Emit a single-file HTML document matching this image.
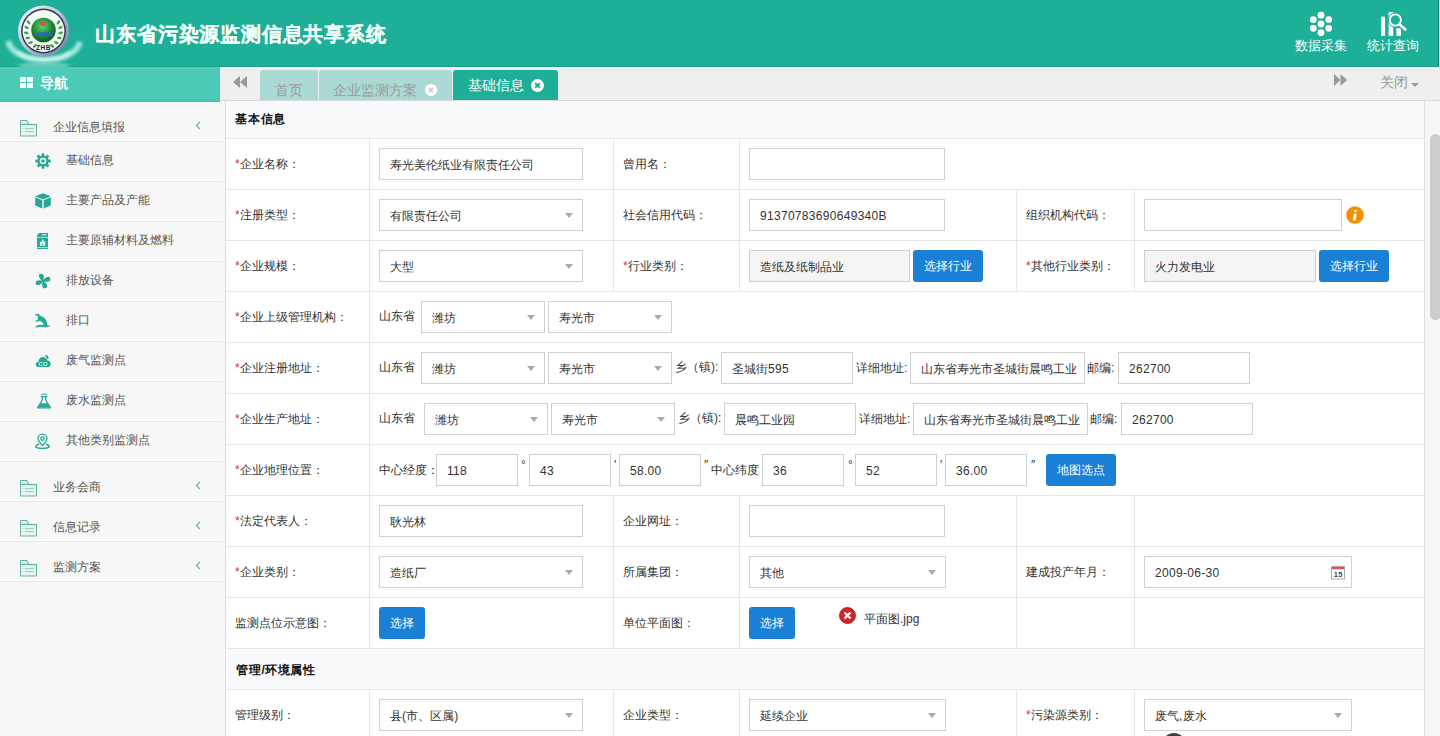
<!DOCTYPE html><html><head><meta charset="utf-8"><title>山东省污染源监测信息共享系统</title><style>
*{margin:0;padding:0;box-sizing:border-box;}
html,body{width:1440px;height:736px;overflow:hidden;background:#f7f7f7;font-family:"Liberation Sans",sans-serif;font-size:12px;color:#333;white-space:nowrap;}
.abs{position:absolute;}
.c{display:inline-block;width:1em;text-align:center;}
.ttl .c{width:20.8px;}
.sec .c{width:12.7px;}
#hdr{position:absolute;left:0;top:0;width:1440px;height:67px;background:#1daf97;border-bottom:1px solid #1a9f8a;}
#nav{position:absolute;z-index:2;left:0;top:67px;width:220px;height:35px;background:linear-gradient(#4ccbb8 0,#4ccbb8 88%,#42c0ab 100%);}
#tabs{position:absolute;left:220px;top:67px;width:1220px;height:34px;background:#efefef;border-top:1px solid #e2fbf6;border-bottom:1px solid #d9d9d9;}
.tab{position:absolute;top:2px;height:30px;border-radius:3px 3px 0 0;background:#abdad4;color:#9a9a9a;font-size:14px;}
.tab.on{background:#1daf97;color:#fff;}
#side{position:absolute;left:0;top:101px;width:220px;height:635px;background:#f7f7f7;}
.si{position:absolute;left:0;width:220px;height:40px;border-bottom:1px solid #e6e6e6;color:#555;font-size:12px;}
.si span.t{position:absolute;top:13px;}
#content{position:absolute;left:225px;top:101px;width:1199px;height:635px;background:#fff;border-left:1px solid #dcdcdc;overflow:hidden;}
.hl{position:absolute;height:1px;background:#e6e6e6;}
.vl{position:absolute;width:1px;background:#e6e6e6;}
.sec{position:absolute;left:1px;width:1197px;background:#f8f9fb;font-weight:bold;color:#111;font-size:12px;}
.lbl{position:absolute;font-size:12px;color:#333;white-space:nowrap;}
.lbl i{font-style:normal;color:#d2322d;}
.inp{position:absolute;height:32px;border:1px solid #d0d0d0;background:#fff;padding:1px 0 0 10px;line-height:30px;font-size:12px;color:#333;letter-spacing:0.3px;white-space:nowrap;overflow:hidden;}
.inp.g{background:#f4f4f4;}
.sel::after{content:"";position:absolute;right:9px;top:13px;border-left:4.5px solid transparent;border-right:4.5px solid transparent;border-top:5px solid #aaa;}
.btn{position:absolute;height:32px;background:#1a80d6;color:#fff;border-radius:3px;font-size:12px;line-height:32px;text-align:center;}
#sb{position:absolute;left:1424px;top:101px;width:16px;height:635px;background:#f5f6f8;border-left:1px solid #dedede;}
#thumb{position:absolute;left:5px;top:33px;width:11px;height:186px;background:#cdcdd0;border-radius:5.5px;}
</style></head><body>
<div id="hdr">
<svg class="abs" style="left:0;top:0" width="90" height="67" viewBox="0 0 90 67">
<defs>
<radialGradient id="gl" cx="45%" cy="35%" r="65%"><stop offset="0" stop-color="#5fd06a"/><stop offset="0.6" stop-color="#1e8a36"/><stop offset="1" stop-color="#0b5a22"/></radialGradient>
<linearGradient id="ring" x1="0" y1="0" x2="1" y2="1"><stop offset="0" stop-color="#ffffff"/><stop offset="0.5" stop-color="#b8c2cf"/><stop offset="1" stop-color="#6c7890"/></linearGradient>
<linearGradient id="glow" x1="0" y1="0" x2="0" y2="1"><stop offset="0" stop-color="#c8fff6" stop-opacity="0"/><stop offset="0.7" stop-color="#d8fffa" stop-opacity="0.85"/><stop offset="1" stop-color="#e8fffc" stop-opacity="0.2"/></linearGradient>
<filter id="bl" x="-20%" y="-20%" width="140%" height="140%"><feGaussianBlur stdDeviation="1.6"/></filter>
</defs>
<path d="M8 41 C14 66 74 66 80 42" fill="none" stroke="#c9faf2" stroke-width="6" opacity="0.75" filter="url(#bl)"/><path d="M18 52 C28 62 60 62 70 52" fill="none" stroke="#ffffff" stroke-width="3" opacity="0.55" filter="url(#bl)"/>
<ellipse cx="44" cy="66" rx="26" ry="4" fill="#9fe8dc" opacity="0.55" filter="url(#bl)"/>
<circle cx="43.5" cy="31" r="25.5" fill="url(#ring)"/>
<circle cx="43.5" cy="31" r="22.4" fill="#2b3b62"/>
<circle cx="43.5" cy="31" r="20.9" fill="#f3fcf3"/>
<ellipse cx="28.52" cy="22.35" rx="1.2" ry="2.4" fill="#3a9e48" transform="rotate(-40.0 28.52 22.35)"/><ellipse cx="26.58" cy="27.40" rx="1.2" ry="2.4" fill="#3a9e48" transform="rotate(-58.0 26.58 27.40)"/><ellipse cx="26.29" cy="32.81" rx="1.2" ry="2.4" fill="#3a9e48" transform="rotate(-76.0 26.29 32.81)"/><ellipse cx="27.70" cy="38.04" rx="1.2" ry="2.4" fill="#3a9e48" transform="rotate(-94.0 27.70 38.04)"/><ellipse cx="30.64" cy="42.58" rx="1.2" ry="2.4" fill="#3a9e48" transform="rotate(-112.0 30.64 42.58)"/><ellipse cx="34.85" cy="45.98" rx="1.2" ry="2.4" fill="#3a9e48" transform="rotate(-130.0 34.85 45.98)"/><ellipse cx="58.48" cy="22.35" rx="1.2" ry="2.4" fill="#3a9e48" transform="rotate(40.0 58.48 22.35)"/><ellipse cx="60.42" cy="27.40" rx="1.2" ry="2.4" fill="#3a9e48" transform="rotate(58.0 60.42 27.40)"/><ellipse cx="60.71" cy="32.81" rx="1.2" ry="2.4" fill="#3a9e48" transform="rotate(76.0 60.71 32.81)"/><ellipse cx="59.30" cy="38.04" rx="1.2" ry="2.4" fill="#3a9e48" transform="rotate(94.0 59.30 38.04)"/><ellipse cx="56.36" cy="42.58" rx="1.2" ry="2.4" fill="#3a9e48" transform="rotate(112.0 56.36 42.58)"/><ellipse cx="52.15" cy="45.98" rx="1.2" ry="2.4" fill="#3a9e48" transform="rotate(130.0 52.15 45.98)"/>
<circle cx="43.5" cy="30" r="12.3" fill="url(#gl)"/>
<circle cx="43" cy="23.5" r="2.6" fill="#f0425a"/>
<path d="M34 33.5 Q43.5 31 53 33.5 L52 36 Q43.5 34.5 35 36Z" fill="#2a66c8"/>
<text x="43.5" y="49.5" font-size="6.5" font-weight="bold" text-anchor="middle" fill="#1d1d1d" font-family="Liberation Sans" letter-spacing="0.5">ZHB</text>
</svg>
<div class="abs ttl" style="left:95px;top:21px;font-family:'Liberation Sans',sans-serif;font-weight:bold;font-size:20px;color:#f0fffa;white-space:nowrap;-webkit-text-stroke:0.35px #f0fffa;text-shadow:0 0 1px rgba(0,60,50,.4)"><span class="c">山</span><span class="c">东</span><span class="c">省</span><span class="c">污</span><span class="c">染</span><span class="c">源</span><span class="c">监</span><span class="c">测</span><span class="c">信</span><span class="c">息</span><span class="c">共</span><span class="c">享</span><span class="c">系</span><span class="c">统</span></div>
<svg class="abs" style="left:1308px;top:11px" width="26" height="26" viewBox="0 0 26 26" fill="#fff">
<circle cx="13" cy="4.2" r="3.4"/><circle cx="5.3" cy="8.6" r="3.4"/><circle cx="20.7" cy="8.6" r="3.4"/><circle cx="13" cy="13" r="3.4"/>
<circle cx="5.3" cy="17.3" r="3.4"/><circle cx="20.7" cy="17.3" r="3.4"/><circle cx="13" cy="21.7" r="3.4"/></svg>
<div class="abs" style="left:1295px;top:37px;color:#fff;font-size:13px;white-space:nowrap"><span class="c">数</span><span class="c">据</span><span class="c">采</span><span class="c">集</span></div>
<svg class="abs" style="left:1380px;top:11px" width="28" height="26" viewBox="0 0 28 26" fill="#fff">
<rect x="1" y="5.7" width="4.1" height="19.1"/><rect x="8.6" y="1.1" width="4.6" height="23.7"/><rect x="16.4" y="17.2" width="4.6" height="7.6"/>
<circle cx="15.3" cy="9" r="7.4" fill="#1daf97"/><path d="M20 14 L25.6 18.6" stroke="#1daf97" stroke-width="5" stroke-linecap="round"/>
<circle cx="15.3" cy="9" r="5.6" fill="#1daf97" stroke="#fff" stroke-width="1.9"/><path d="M19.6 13.4 L25.4 18.4" stroke="#fff" stroke-width="2.6" stroke-linecap="round"/></svg>
<div class="abs" style="left:1367px;top:37px;color:#fff;font-size:13px;white-space:nowrap"><span class="c">统</span><span class="c">计</span><span class="c">查</span><span class="c">询</span></div>
<div class="abs" style="left:1438px;top:0;width:1px;height:67px;background:#15806f"></div><div class="abs" style="left:1439px;top:0;width:1px;height:67px;background:#e8f5f3"></div>
</div>
<div id="nav"><svg class="abs" style="left:20px;top:10px" width="14" height="12"><rect x="0" y="0" width="6" height="5" fill="#fff"/><rect x="7" y="0" width="6" height="5" fill="#fff"/><rect x="0" y="6" width="6" height="5" fill="#fff"/><rect x="7" y="6" width="6" height="5" fill="#fff"/></svg>
<div class="abs" style="left:40px;top:8px;color:#fff;font-size:14px;font-weight:bold"><span class="c">导</span><span class="c">航</span></div></div>
<div id="tabs">
<svg class="abs" style="left:13px;top:8px" width="14" height="12" fill="#999"><path d="M7 0 L0 6 L7 12Z M14 0 L7 6 L14 12Z"/></svg>
<div class="tab" style="left:40px;width:58px"><span class="abs" style="left:15px;top:12px"><span class="c">首</span><span class="c">页</span></span></div>
<div class="tab" style="left:99px;width:133px"><span class="abs" style="left:14px;top:12px"><span class="c">企</span><span class="c">业</span><span class="c">监</span><span class="c">测</span><span class="c">方</span><span class="c">案</span></span><svg class="abs" style="left:106px;top:14px" width="12" height="12"><circle cx="6" cy="6" r="6" fill="#fff"/><path d="M3.8 3.8 L8.2 8.2 M8.2 3.8 L3.8 8.2" stroke="#ccc" stroke-width="1.6"/></svg></div>
<div class="tab on" style="left:233px;width:105px"><span class="abs" style="left:15px;top:7px;letter-spacing:0.6px"><span class="c">基</span><span class="c">础</span><span class="c">信</span><span class="c">息</span></span><svg class="abs" style="left:78px;top:8.5px" width="13" height="13"><circle cx="6.5" cy="6.5" r="6.5" fill="#fff"/><path d="M4.2 4.2 L8.8 8.8 M8.8 4.2 L4.2 8.8" stroke="#1fad97" stroke-width="2"/></svg></div>
<svg class="abs" style="left:1114px;top:6px" width="13" height="12" fill="#999"><path d="M0 0 L6.5 6 L0 12Z M6.5 0 L13 6 L6.5 12Z"/></svg>
<div class="abs" style="left:1160px;top:6px;color:#999;font-size:14px"><span class="c">关</span><span class="c">闭</span></div><div class="abs" style="left:1191px;top:15px;border-left:4px solid transparent;border-right:4px solid transparent;border-top:4px solid #999"></div>
</div>
<div id="side">
<svg class="abs" style="left:20px;top:19px" width="18" height="17" viewBox="0 0 18 17"><path d="M0.5 16 V0.5 H7 L8.5 4.5 H16.5 V16Z" fill="#e4f7f1" stroke="#63b0a2" stroke-width="1"/><path d="M0.5 4.5 H16.5" stroke="#63b0a2" stroke-width="1.2"/><path d="M2.5 8.5 H3.5 M5 8.5 H14 M2.5 11.5 H3.5 M5 11.5 H14" stroke="#9ccfc4" stroke-width="1"/></svg><span class="abs" style="left:53px;top:18px;color:#555"><span class="c">企</span><span class="c">业</span><span class="c">信</span><span class="c">息</span><span class="c">填</span><span class="c">报</span></span><svg class="abs" style="left:195px;top:20px" width="6" height="9"><path d="M4.8 1 L1.4 4.5 L4.8 8" stroke="#4fb3a3" stroke-width="1.1" fill="none"/></svg>
<div class="abs" style="left:0;top:36px;width:220px;height:1px;background:#fafafa"></div><div class="abs" style="left:0;top:37px;width:220px;height:1px;background:#f4f4f4"></div><div class="abs" style="left:0;top:38px;width:220px;height:2px;background:#fbfbfb"></div><div class="abs" style="left:0;top:40px;width:220px;height:1px;background:#e8e8e8"></div>
<div class="abs" style="left:35px;top:52px;line-height:0"><svg width="16" height="16" viewBox="0 0 16 16"><g fill="#26a894"><circle cx="8" cy="8" r="5.6"/><rect x="6.6" y="0.3" width="2.8" height="3.6" rx="0.4" transform="rotate(0 8 8)"/><rect x="6.6" y="0.3" width="2.8" height="3.6" rx="0.4" transform="rotate(45 8 8)"/><rect x="6.6" y="0.3" width="2.8" height="3.6" rx="0.4" transform="rotate(90 8 8)"/><rect x="6.6" y="0.3" width="2.8" height="3.6" rx="0.4" transform="rotate(135 8 8)"/><rect x="6.6" y="0.3" width="2.8" height="3.6" rx="0.4" transform="rotate(180 8 8)"/><rect x="6.6" y="0.3" width="2.8" height="3.6" rx="0.4" transform="rotate(225 8 8)"/><rect x="6.6" y="0.3" width="2.8" height="3.6" rx="0.4" transform="rotate(270 8 8)"/><rect x="6.6" y="0.3" width="2.8" height="3.6" rx="0.4" transform="rotate(315 8 8)"/></g><circle cx="8" cy="8" r="3.3" fill="#f7f7f7"/><circle cx="8" cy="8" r="1.8" fill="#26a894"/></svg></div><span class="abs" style="left:66px;top:51px;color:#555"><span class="c">基</span><span class="c">础</span><span class="c">信</span><span class="c">息</span></span>
<div class="abs" style="left:0;top:76px;width:220px;height:1px;background:#fafafa"></div><div class="abs" style="left:0;top:77px;width:220px;height:1px;background:#f4f4f4"></div><div class="abs" style="left:0;top:78px;width:220px;height:2px;background:#fbfbfb"></div><div class="abs" style="left:0;top:80px;width:220px;height:1px;background:#e8e8e8"></div>
<div class="abs" style="left:35px;top:92px;line-height:0"><svg width="16" height="16" viewBox="0 0 16 16"><path d="M8 0.3 L15.8 3.3 L8 6.4 L0.2 3.3Z" fill="#26a894"/><path d="M0.2 4.3 L7.3 7.3 V15.6 L0.2 12.6Z M15.8 4.3 L8.7 7.3 V15.6 L15.8 12.6Z" fill="#26a894"/></svg></div><span class="abs" style="left:66px;top:91px;color:#555"><span class="c">主</span><span class="c">要</span><span class="c">产</span><span class="c">品</span><span class="c">及</span><span class="c">产</span><span class="c">能</span></span>
<div class="abs" style="left:0;top:116px;width:220px;height:1px;background:#fafafa"></div><div class="abs" style="left:0;top:117px;width:220px;height:1px;background:#f4f4f4"></div><div class="abs" style="left:0;top:118px;width:220px;height:2px;background:#fbfbfb"></div><div class="abs" style="left:0;top:120px;width:220px;height:1px;background:#e8e8e8"></div>
<div class="abs" style="left:37px;top:132px;line-height:0"><svg width="11" height="16" viewBox="0 0 11 16"><path d="M2.2 0 H11 V16 H0 V2.2Z" fill="#26a894"/><rect x="5" y="1" width="4.5" height="1.4" fill="#bfe9e0"/><rect x="0" y="3.9" width="11" height="0.9" fill="#bfe9e0"/><rect x="0" y="14" width="11" height="0.8" fill="#bfe9e0"/><path d="M5.6 5.8 L7.6 9 L8.2 8 C8.8 9.5 8.6 12 7.5 13 H3.5 C2.6 12 2.6 9.5 3.6 8.2 L4.1 9.3Z" fill="#d8f5ef"/><path d="M5.5 10.5 C6.3 11.3 6.3 12.4 5.5 13 C4.7 12.4 4.7 11.3 5.5 10.5Z" fill="#26a894"/></svg></div><span class="abs" style="left:66px;top:131px;color:#555"><span class="c">主</span><span class="c">要</span><span class="c">原</span><span class="c">辅</span><span class="c">材</span><span class="c">料</span><span class="c">及</span><span class="c">燃</span><span class="c">料</span></span>
<div class="abs" style="left:0;top:156px;width:220px;height:1px;background:#fafafa"></div><div class="abs" style="left:0;top:157px;width:220px;height:1px;background:#f4f4f4"></div><div class="abs" style="left:0;top:158px;width:220px;height:2px;background:#fbfbfb"></div><div class="abs" style="left:0;top:160px;width:220px;height:1px;background:#e8e8e8"></div>
<div class="abs" style="left:35px;top:172px;line-height:0"><svg width="16" height="16" viewBox="0 0 16 16" fill="#26a894"><path d="M8 8 C6.2 6.6 5.4 3.6 6 1.6 C6.6 -0.2 9.8 0 10.4 1.8 C11 3.8 9.8 6.6 8 8Z" transform="rotate(-22 8 8)"/><path d="M8 8 C6.2 6.6 5.4 3.6 6 1.6 C6.6 -0.2 9.8 0 10.4 1.8 C11 3.8 9.8 6.6 8 8Z" transform="rotate(68 8 8)"/><path d="M8 8 C6.2 6.6 5.4 3.6 6 1.6 C6.6 -0.2 9.8 0 10.4 1.8 C11 3.8 9.8 6.6 8 8Z" transform="rotate(158 8 8)"/><path d="M8 8 C6.2 6.6 5.4 3.6 6 1.6 C6.6 -0.2 9.8 0 10.4 1.8 C11 3.8 9.8 6.6 8 8Z" transform="rotate(248 8 8)"/><circle cx="8" cy="8" r="1.2"/></svg></div><span class="abs" style="left:66px;top:171px;color:#555"><span class="c">排</span><span class="c">放</span><span class="c">设</span><span class="c">备</span></span>
<div class="abs" style="left:0;top:196px;width:220px;height:1px;background:#fafafa"></div><div class="abs" style="left:0;top:197px;width:220px;height:1px;background:#f4f4f4"></div><div class="abs" style="left:0;top:198px;width:220px;height:2px;background:#fbfbfb"></div><div class="abs" style="left:0;top:200px;width:220px;height:1px;background:#e8e8e8"></div>
<div class="abs" style="left:35px;top:211px;line-height:0"><svg width="16" height="16" viewBox="0 0 16 16" fill="#26a894"><path d="M0.3 2 H4.3 V9.6 H0.5 V8.3 H2.8 V3.4 H0.3Z"/><path d="M3.6 3.2 C7.5 4 10.8 6.3 11.8 9.8 L12.6 14 H9 C8.8 11.3 7 9.2 3.6 8.4Z"/><path d="M0.4 15.2 C1.8 12.8 4.8 12.3 7.8 13 C10.2 13.6 13 13.6 15.8 12.9 C14.6 15.1 11.5 15.6 8 15.1 C5 14.6 2.8 14.4 1.6 15.8Z"/></svg></div><span class="abs" style="left:66px;top:211px;color:#555"><span class="c">排</span><span class="c">口</span></span>
<div class="abs" style="left:0;top:236px;width:220px;height:1px;background:#fafafa"></div><div class="abs" style="left:0;top:237px;width:220px;height:1px;background:#f4f4f4"></div><div class="abs" style="left:0;top:238px;width:220px;height:2px;background:#fbfbfb"></div><div class="abs" style="left:0;top:240px;width:220px;height:1px;background:#e8e8e8"></div>
<div class="abs" style="left:35px;top:252px;line-height:0"><svg width="16" height="15" viewBox="0 0 16 15"><path d="M3.5 14 C1.2 14 0.5 12.2 0.8 10.8 C1.1 9.3 2.4 8.6 3.4 8.8 C3.6 5.6 5.8 3.8 8.2 4 C10.5 4.2 11.8 5.8 12.1 7.4 C14.2 7.3 15.7 9 15.7 10.9 C15.7 12.8 14.4 14 12.6 14Z" fill="#26a894"/><path d="M10.5 1.8 C12.3 2 13.6 3.6 13.8 5.6 L12.2 6.6 C11.8 5 11 3.6 10 3Z" fill="#26a894"/><text x="3.3" y="13.2" font-size="6.2" font-weight="bold" fill="#c8f3ea" font-family="Liberation Sans">CO</text></svg></div><span class="abs" style="left:66px;top:251px;color:#555"><span class="c">废</span><span class="c">气</span><span class="c">监</span><span class="c">测</span><span class="c">点</span></span>
<div class="abs" style="left:0;top:276px;width:220px;height:1px;background:#fafafa"></div><div class="abs" style="left:0;top:277px;width:220px;height:1px;background:#f4f4f4"></div><div class="abs" style="left:0;top:278px;width:220px;height:2px;background:#fbfbfb"></div><div class="abs" style="left:0;top:280px;width:220px;height:1px;background:#e8e8e8"></div>
<div class="abs" style="left:36px;top:292px;line-height:0"><svg width="16" height="16" viewBox="0 0 16 16"><circle cx="6.3" cy="1.5" r="0.8" fill="#26a894"/><circle cx="8.3" cy="1.1" r="0.8" fill="#26a894"/><circle cx="10" cy="1.6" r="0.8" fill="#26a894"/><path d="M4.8 3.6 H11.2" stroke="#26a894" stroke-width="1.4"/><path d="M6.3 4 V7 L1.5 14.8 H14.5 L9.7 7 V4" stroke="#26a894" stroke-width="1.3" fill="none" stroke-linejoin="round"/><path d="M4.3 10.2 H11.7 L14 14.3 H2Z" fill="#26a894"/></svg></div><span class="abs" style="left:66px;top:291px;color:#555"><span class="c">废</span><span class="c">水</span><span class="c">监</span><span class="c">测</span><span class="c">点</span></span>
<div class="abs" style="left:0;top:316px;width:220px;height:1px;background:#fafafa"></div><div class="abs" style="left:0;top:317px;width:220px;height:1px;background:#f4f4f4"></div><div class="abs" style="left:0;top:318px;width:220px;height:2px;background:#fbfbfb"></div><div class="abs" style="left:0;top:320px;width:220px;height:1px;background:#e8e8e8"></div>
<div class="abs" style="left:35px;top:332px;line-height:0"><svg width="16" height="16" viewBox="0 0 16 16" fill="none" stroke="#26a894" stroke-width="1.3"><path d="M7.5 12.5 C5 10.2 3 8 3 5.6 A4.5 4.5 0 0 1 12 5.6 C12 8 10 10.2 7.5 12.5Z"/><circle cx="7.5" cy="5.6" r="1.7"/><path d="M4.2 11.2 C1.8 11.8 0.8 12.8 0.8 13.6 C0.8 14.8 4 15.4 7.5 15.4 C11 15.4 14.2 14.8 14.2 13.6 C14.2 12.8 13.2 11.8 10.8 11.2" stroke-width="1.5"/></svg></div><span class="abs" style="left:66px;top:331px;color:#555"><span class="c">其</span><span class="c">他</span><span class="c">类</span><span class="c">别</span><span class="c">监</span><span class="c">测</span><span class="c">点</span></span>
<div class="abs" style="left:0;top:356px;width:220px;height:1px;background:#fafafa"></div><div class="abs" style="left:0;top:357px;width:220px;height:1px;background:#f4f4f4"></div><div class="abs" style="left:0;top:358px;width:220px;height:2px;background:#fbfbfb"></div><div class="abs" style="left:0;top:360px;width:220px;height:1px;background:#e8e8e8"></div>
<svg class="abs" style="left:20px;top:379px" width="18" height="17" viewBox="0 0 18 17"><path d="M0.5 16 V0.5 H7 L8.5 4.5 H16.5 V16Z" fill="#e4f7f1" stroke="#63b0a2" stroke-width="1"/><path d="M0.5 4.5 H16.5" stroke="#63b0a2" stroke-width="1.2"/><path d="M2.5 8.5 H3.5 M5 8.5 H14 M2.5 11.5 H3.5 M5 11.5 H14" stroke="#9ccfc4" stroke-width="1"/></svg><span class="abs" style="left:53px;top:378px;color:#555"><span class="c">业</span><span class="c">务</span><span class="c">会</span><span class="c">商</span></span><svg class="abs" style="left:195px;top:380px" width="6" height="9"><path d="M4.8 1 L1.4 4.5 L4.8 8" stroke="#4fb3a3" stroke-width="1.1" fill="none"/></svg>
<div class="abs" style="left:0;top:396px;width:220px;height:1px;background:#fafafa"></div><div class="abs" style="left:0;top:397px;width:220px;height:1px;background:#f4f4f4"></div><div class="abs" style="left:0;top:398px;width:220px;height:2px;background:#fbfbfb"></div><div class="abs" style="left:0;top:400px;width:220px;height:1px;background:#e8e8e8"></div>
<svg class="abs" style="left:20px;top:419px" width="18" height="17" viewBox="0 0 18 17"><path d="M0.5 16 V0.5 H7 L8.5 4.5 H16.5 V16Z" fill="#e4f7f1" stroke="#63b0a2" stroke-width="1"/><path d="M0.5 4.5 H16.5" stroke="#63b0a2" stroke-width="1.2"/><path d="M2.5 8.5 H3.5 M5 8.5 H14 M2.5 11.5 H3.5 M5 11.5 H14" stroke="#9ccfc4" stroke-width="1"/></svg><span class="abs" style="left:53px;top:418px;color:#555"><span class="c">信</span><span class="c">息</span><span class="c">记</span><span class="c">录</span></span><svg class="abs" style="left:195px;top:420px" width="6" height="9"><path d="M4.8 1 L1.4 4.5 L4.8 8" stroke="#4fb3a3" stroke-width="1.1" fill="none"/></svg>
<div class="abs" style="left:0;top:436px;width:220px;height:1px;background:#fafafa"></div><div class="abs" style="left:0;top:437px;width:220px;height:1px;background:#f4f4f4"></div><div class="abs" style="left:0;top:438px;width:220px;height:2px;background:#fbfbfb"></div><div class="abs" style="left:0;top:440px;width:220px;height:1px;background:#e8e8e8"></div>
<svg class="abs" style="left:20px;top:459px" width="18" height="17" viewBox="0 0 18 17"><path d="M0.5 16 V0.5 H7 L8.5 4.5 H16.5 V16Z" fill="#e4f7f1" stroke="#63b0a2" stroke-width="1"/><path d="M0.5 4.5 H16.5" stroke="#63b0a2" stroke-width="1.2"/><path d="M2.5 8.5 H3.5 M5 8.5 H14 M2.5 11.5 H3.5 M5 11.5 H14" stroke="#9ccfc4" stroke-width="1"/></svg><span class="abs" style="left:53px;top:458px;color:#555"><span class="c">监</span><span class="c">测</span><span class="c">方</span><span class="c">案</span></span><svg class="abs" style="left:195px;top:460px" width="6" height="9"><path d="M4.8 1 L1.4 4.5 L4.8 8" stroke="#4fb3a3" stroke-width="1.1" fill="none"/></svg>
<div class="abs" style="left:0;top:476px;width:220px;height:1px;background:#fafafa"></div><div class="abs" style="left:0;top:477px;width:220px;height:1px;background:#f4f4f4"></div><div class="abs" style="left:0;top:478px;width:220px;height:2px;background:#fbfbfb"></div><div class="abs" style="left:0;top:480px;width:220px;height:1px;background:#e8e8e8"></div>
</div>
<div id="content">
<div class="sec" style="top:0;height:37px"><span class="abs" style="left:8px;top:10px"><span class="c">基</span><span class="c">本</span><span class="c">信</span><span class="c">息</span></span></div>
<div class="hl" style="left:0px;top:37px;width:1198px"></div>
<div class="hl" style="left:0px;top:88px;width:1198px"></div>
<div class="hl" style="left:0px;top:139px;width:1198px"></div>
<div class="hl" style="left:0px;top:190px;width:1198px"></div>
<div class="hl" style="left:0px;top:241px;width:1198px"></div>
<div class="hl" style="left:0px;top:292px;width:1198px"></div>
<div class="hl" style="left:0px;top:343px;width:1198px"></div>
<div class="hl" style="left:0px;top:394px;width:1198px"></div>
<div class="hl" style="left:0px;top:445px;width:1198px"></div>
<div class="hl" style="left:0px;top:496px;width:1198px"></div>
<div class="hl" style="left:0px;top:547px;width:1198px"></div>
<div class="hl" style="left:0px;top:588px;width:1198px"></div>
<div class="vl" style="left:143px;top:37px;height:510px"></div>
<div class="vl" style="left:143px;top:588px;height:47px"></div>
<div class="vl" style="left:387px;top:37px;height:153px"></div>
<div class="vl" style="left:513px;top:37px;height:153px"></div>
<div class="vl" style="left:387px;top:394px;height:153px"></div>
<div class="vl" style="left:513px;top:394px;height:153px"></div>
<div class="vl" style="left:387px;top:588px;height:47px"></div>
<div class="vl" style="left:513px;top:588px;height:47px"></div>
<div class="vl" style="left:790px;top:88px;height:102px"></div>
<div class="vl" style="left:908px;top:88px;height:102px"></div>
<div class="vl" style="left:790px;top:394px;height:153px"></div>
<div class="vl" style="left:908px;top:394px;height:153px"></div>
<div class="vl" style="left:790px;top:588px;height:47px"></div>
<div class="vl" style="left:908px;top:588px;height:47px"></div>
<div class="lbl" style="left:9px;top:55px"><i>*</i><span class="c">企</span><span class="c">业</span><span class="c">名</span><span class="c">称</span><span class="c">：</span></div>
<div class="inp" style="left:153px;top:47px;width:204px"><span class="c">寿</span><span class="c">光</span><span class="c">美</span><span class="c">伦</span><span class="c">纸</span><span class="c">业</span><span class="c">有</span><span class="c">限</span><span class="c">责</span><span class="c">任</span><span class="c">公</span><span class="c">司</span></div>
<div class="lbl" style="left:397px;top:55px"><span class="c">曾</span><span class="c">用</span><span class="c">名</span><span class="c">：</span></div>
<div class="inp" style="left:523px;top:47px;width:196px"></div>
<div class="lbl" style="left:9px;top:106px"><i>*</i><span class="c">注</span><span class="c">册</span><span class="c">类</span><span class="c">型</span><span class="c">：</span></div>
<div class="inp sel" style="left:153px;top:98px;width:204px"><span class="c">有</span><span class="c">限</span><span class="c">责</span><span class="c">任</span><span class="c">公</span><span class="c">司</span></div>
<div class="lbl" style="left:397px;top:106px"><span class="c">社</span><span class="c">会</span><span class="c">信</span><span class="c">用</span><span class="c">代</span><span class="c">码</span><span class="c">：</span></div>
<div class="inp" style="left:523px;top:98px;width:196px">91370783690649340B</div>
<div class="lbl" style="left:800px;top:106px"><span class="c">组</span><span class="c">织</span><span class="c">机</span><span class="c">构</span><span class="c">代</span><span class="c">码</span><span class="c">：</span></div>
<div class="inp" style="left:918px;top:98px;width:198px"></div>
<svg class="abs" style="left:1120px;top:105px" width="18" height="18"><circle cx="9" cy="9" r="8.8" fill="#f29106"/><rect x="8.2" y="4" width="2.4" height="2" fill="#fff"/><path d="M8 7.5 H10.6 L9.6 14.5 H7Z" fill="#fff"/></svg>
<div class="lbl" style="left:9px;top:157px"><i>*</i><span class="c">企</span><span class="c">业</span><span class="c">规</span><span class="c">模</span><span class="c">：</span></div>
<div class="inp sel" style="left:153px;top:149px;width:204px"><span class="c">大</span><span class="c">型</span></div>
<div class="lbl" style="left:397px;top:157px"><i>*</i><span class="c">行</span><span class="c">业</span><span class="c">类</span><span class="c">别</span><span class="c">：</span></div>
<div class="inp g" style="left:523px;top:149px;width:161px"><span class="c">造</span><span class="c">纸</span><span class="c">及</span><span class="c">纸</span><span class="c">制</span><span class="c">品</span><span class="c">业</span></div>
<div class="btn" style="left:687px;top:149px;width:70px"><span class="c">选</span><span class="c">择</span><span class="c">行</span><span class="c">业</span></div>
<div class="lbl" style="left:800px;top:157px"><i>*</i><span class="c">其</span><span class="c">他</span><span class="c">行</span><span class="c">业</span><span class="c">类</span><span class="c">别</span><span class="c">：</span></div>
<div class="inp g" style="left:918px;top:149px;width:172px"><span class="c">火</span><span class="c">力</span><span class="c">发</span><span class="c">电</span><span class="c">业</span></div>
<div class="btn" style="left:1093px;top:149px;width:70px"><span class="c">选</span><span class="c">择</span><span class="c">行</span><span class="c">业</span></div>
<div class="lbl" style="left:9px;top:208px"><i>*</i><span class="c">企</span><span class="c">业</span><span class="c">上</span><span class="c">级</span><span class="c">管</span><span class="c">理</span><span class="c">机</span><span class="c">构</span><span class="c">：</span></div>
<div class="lbl" style="left:153px;top:207px"><span class="c">山</span><span class="c">东</span><span class="c">省</span></div>
<div class="inp sel" style="left:195px;top:200px;width:124px"><span class="c">潍</span><span class="c">坊</span></div>
<div class="inp sel" style="left:322px;top:200px;width:124px"><span class="c">寿</span><span class="c">光</span><span class="c">市</span></div>
<div class="lbl" style="left:9px;top:259px"><i>*</i><span class="c">企</span><span class="c">业</span><span class="c">注</span><span class="c">册</span><span class="c">地</span><span class="c">址</span><span class="c">：</span></div>
<div class="lbl" style="left:153px;top:258px"><span class="c">山</span><span class="c">东</span><span class="c">省</span></div>
<div class="inp sel" style="left:195px;top:251px;width:124px"><span class="c">潍</span><span class="c">坊</span></div>
<div class="inp sel" style="left:322px;top:251px;width:124px"><span class="c">寿</span><span class="c">光</span><span class="c">市</span></div>
<div class="lbl" style="left:449px;top:258px"><span class="c">乡</span><span class="c">（</span><span class="c">镇</span>):</div>
<div class="inp" style="left:495px;top:251px;width:132px"><span class="c">圣</span><span class="c">城</span><span class="c">街</span>595</div>
<div class="lbl" style="left:630px;top:259px"><span class="c">详</span><span class="c">细</span><span class="c">地</span><span class="c">址</span>:</div>
<div class="inp" style="left:684px;top:251px;width:175px"><span class="c">山</span><span class="c">东</span><span class="c">省</span><span class="c">寿</span><span class="c">光</span><span class="c">市</span><span class="c">圣</span><span class="c">城</span><span class="c">街</span><span class="c">晨</span><span class="c">鸣</span><span class="c">工</span><span class="c">业</span></div>
<div class="lbl" style="left:861px;top:259px"><span class="c">邮</span><span class="c">编</span>:</div>
<div class="inp" style="left:892px;top:251px;width:132px">262700</div>
<div class="lbl" style="left:9px;top:310px"><i>*</i><span class="c">企</span><span class="c">业</span><span class="c">生</span><span class="c">产</span><span class="c">地</span><span class="c">址</span><span class="c">：</span></div>
<div class="lbl" style="left:153px;top:309px"><span class="c">山</span><span class="c">东</span><span class="c">省</span></div>
<div class="inp sel" style="left:198px;top:302px;width:124px"><span class="c">潍</span><span class="c">坊</span></div>
<div class="inp sel" style="left:325px;top:302px;width:124px"><span class="c">寿</span><span class="c">光</span><span class="c">市</span></div>
<div class="lbl" style="left:452px;top:309px"><span class="c">乡</span><span class="c">（</span><span class="c">镇</span>):</div>
<div class="inp" style="left:498px;top:302px;width:132px"><span class="c">晨</span><span class="c">鸣</span><span class="c">工</span><span class="c">业</span><span class="c">园</span></div>
<div class="lbl" style="left:633px;top:310px"><span class="c">详</span><span class="c">细</span><span class="c">地</span><span class="c">址</span>:</div>
<div class="inp" style="left:687px;top:302px;width:175px"><span class="c">山</span><span class="c">东</span><span class="c">省</span><span class="c">寿</span><span class="c">光</span><span class="c">市</span><span class="c">圣</span><span class="c">城</span><span class="c">街</span><span class="c">晨</span><span class="c">鸣</span><span class="c">工</span><span class="c">业</span></div>
<div class="lbl" style="left:864px;top:310px"><span class="c">邮</span><span class="c">编</span>:</div>
<div class="inp" style="left:895px;top:302px;width:132px">262700</div>
<div class="lbl" style="left:9px;top:361px"><i>*</i><span class="c">企</span><span class="c">业</span><span class="c">地</span><span class="c">理</span><span class="c">位</span><span class="c">置</span><span class="c">：</span></div>
<div class="lbl" style="left:153px;top:361px"><span class="c">中</span><span class="c">心</span><span class="c">经</span><span class="c">度</span><span class="c">：</span></div>
<div class="inp" style="left:210px;top:353px;width:82px">118</div>
<div class="lbl" style="left:295px;top:357px">°</div>
<div class="inp" style="left:303px;top:353px;width:82px">43</div>
<div class="lbl" style="left:388px;top:357px">′</div>
<div class="inp" style="left:393px;top:353px;width:82px">58.00</div>
<div class="lbl" style="left:478px;top:357px">″</div>
<div class="lbl" style="left:485px;top:361px"><span class="c">中</span><span class="c">心</span><span class="c">纬</span><span class="c">度</span></div>
<div class="inp" style="left:536px;top:353px;width:82px">36</div>
<div class="lbl" style="left:622px;top:357px">°</div>
<div class="inp" style="left:629px;top:353px;width:82px">52</div>
<div class="lbl" style="left:714px;top:357px">′</div>
<div class="inp" style="left:719px;top:353px;width:82px">36.00</div>
<div class="lbl" style="left:805px;top:357px">″</div>
<div class="btn" style="left:820px;top:353px;width:70px"><span class="c">地</span><span class="c">图</span><span class="c">选</span><span class="c">点</span></div>
<div class="lbl" style="left:9px;top:412px"><i>*</i><span class="c">法</span><span class="c">定</span><span class="c">代</span><span class="c">表</span><span class="c">人</span><span class="c">：</span></div>
<div class="inp" style="left:153px;top:404px;width:204px"><span class="c">耿</span><span class="c">光</span><span class="c">林</span></div>
<div class="lbl" style="left:397px;top:412px"><span class="c">企</span><span class="c">业</span><span class="c">网</span><span class="c">址</span><span class="c">：</span></div>
<div class="inp" style="left:523px;top:404px;width:196px"></div>
<div class="lbl" style="left:9px;top:463px"><i>*</i><span class="c">企</span><span class="c">业</span><span class="c">类</span><span class="c">别</span><span class="c">：</span></div>
<div class="inp sel" style="left:153px;top:455px;width:204px"><span class="c">造</span><span class="c">纸</span><span class="c">厂</span></div>
<div class="lbl" style="left:397px;top:463px"><span class="c">所</span><span class="c">属</span><span class="c">集</span><span class="c">团</span><span class="c">：</span></div>
<div class="inp sel" style="left:523px;top:455px;width:197px"><span class="c">其</span><span class="c">他</span></div>
<div class="lbl" style="left:800px;top:463px"><span class="c">建</span><span class="c">成</span><span class="c">投</span><span class="c">产</span><span class="c">年</span><span class="c">月</span><span class="c">：</span></div>
<div class="inp" style="left:918px;top:455px;width:208px">2009-06-30<svg class="abs" style="left:186px;top:8px" width="15" height="15"><rect x="0.5" y="1.5" width="13" height="12.5" fill="#fff" stroke="#aaa"/><rect x="1" y="2" width="12" height="2.2" fill="#d9534f"/><rect x="3" y="0.8" width="8" height="1" fill="#d99"/><text x="7.3" y="11.8" font-size="7.5" font-weight="bold" text-anchor="middle" fill="#444" font-family="Liberation Sans">15</text></svg></div>
<div class="lbl" style="left:9px;top:514px"><span class="c">监</span><span class="c">测</span><span class="c">点</span><span class="c">位</span><span class="c">示</span><span class="c">意</span><span class="c">图</span><span class="c">：</span></div>
<div class="btn" style="left:153px;top:506px;width:46px"><span class="c">选</span><span class="c">择</span></div>
<div class="lbl" style="left:397px;top:514px"><span class="c">单</span><span class="c">位</span><span class="c">平</span><span class="c">面</span><span class="c">图</span><span class="c">：</span></div>
<div class="btn" style="left:523px;top:506px;width:46px"><span class="c">选</span><span class="c">择</span></div>
<svg class="abs" style="left:613px;top:506px" width="17" height="17"><circle cx="8.5" cy="8.5" r="8" fill="#d4242a" stroke="#a01418" stroke-width="0.8"/><path d="M5.5 5.5 L11.5 11.5 M11.5 5.5 L5.5 11.5" stroke="#fff" stroke-width="2.2"/></svg>
<div class="lbl" style="left:638px;top:510px"><span class="c">平</span><span class="c">面</span><span class="c">图</span>.jpg</div>
<div class="sec" style="top:548px;height:40px"><span class="abs" style="left:9px;top:13px"><span class="c">管</span><span class="c">理</span>/<span class="c">环</span><span class="c">境</span><span class="c">属</span><span class="c">性</span></span></div>
<div class="lbl" style="left:9px;top:606px"><span class="c">管</span><span class="c">理</span><span class="c">级</span><span class="c">别</span><span class="c">：</span></div>
<div class="inp sel" style="left:153px;top:598px;width:204px"><span class="c">县</span>(<span class="c">市</span><span class="c">、</span><span class="c">区</span><span class="c">属</span>)</div>
<div class="lbl" style="left:397px;top:606px"><span class="c">企</span><span class="c">业</span><span class="c">类</span><span class="c">型</span><span class="c">：</span></div>
<div class="inp sel" style="left:523px;top:598px;width:197px"><span class="c">延</span><span class="c">续</span><span class="c">企</span><span class="c">业</span></div>
<div class="lbl" style="left:800px;top:606px"><i>*</i><span class="c">污</span><span class="c">染</span><span class="c">源</span><span class="c">类</span><span class="c">别</span><span class="c">：</span></div>
<div class="inp sel" style="left:918px;top:598px;width:208px"><span class="c">废</span><span class="c">气</span>,<span class="c">废</span><span class="c">水</span></div>
</div>
<div class="abs" style="left:1162px;top:733px;width:24px;height:24px;border-radius:12px;background:#3c3c4a;box-shadow:0 0 3px 2px rgba(255,255,255,.9)"></div>
<div id="sb"><div id="thumb"></div></div>
</body></html>
